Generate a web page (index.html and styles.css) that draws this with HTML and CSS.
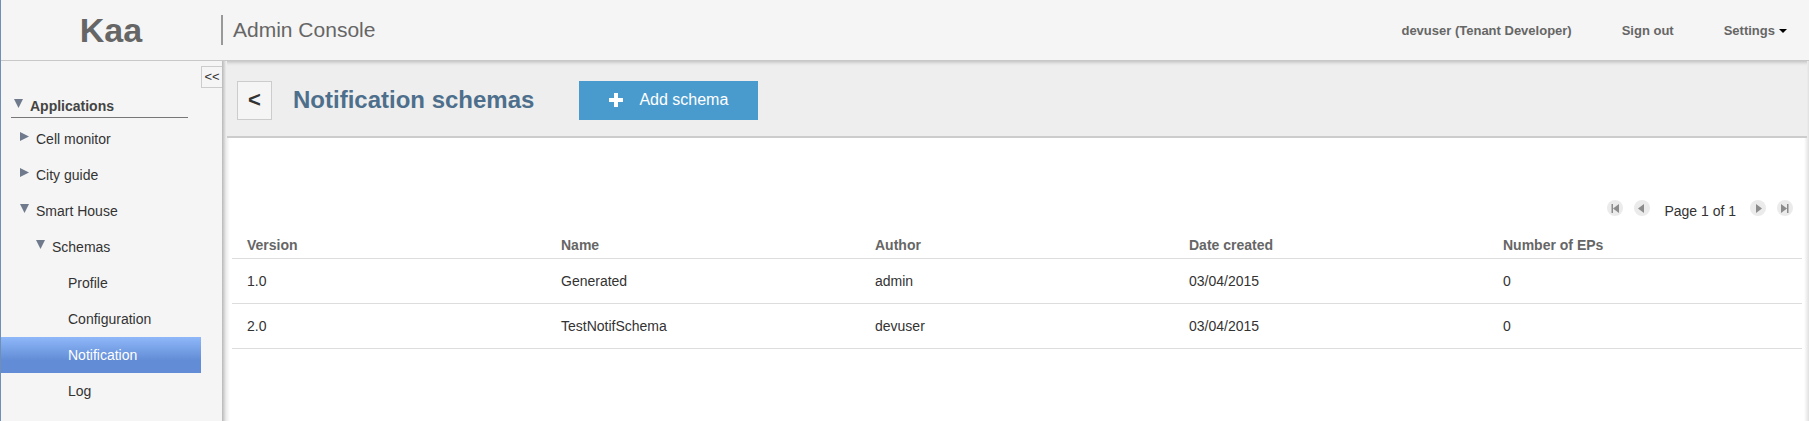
FILE: index.html
```html
<!DOCTYPE html>
<html lang="en">
<head>
<meta charset="utf-8">
<title>Kaa Admin Console</title>
<link rel="stylesheet" href="styles.css">
</head>
<body>
<header class="topbar">
  <div class="brand">Kaa</div>
  <div class="product">Admin Console</div>
  <nav class="menu">
    <a class="menu-link" href="#user">devuser (Tenant Developer)</a>
    <a class="menu-link" href="#signout">Sign out</a>
    <button class="menu-link settings" type="button">Settings
      <svg class="caret" width="8" height="4" viewBox="0 0 8 4"><path d="M0 0h8L4 4z" fill="#000"/></svg>
    </button>
  </nav>
</header>
<div class="body">
  <aside class="sidebar">
    <nav class="tree">
      <a class="tree-root" href="#applications">
        <svg class="arrow" width="9" height="9" viewBox="0 0 9 9"><path d="M0 0h9L4.500 9z"/></svg>Applications</a>
      <ul class="tree-list">
        <li><a class="node level-1" href="#cell"><svg class="arrow" width="9" height="9" viewBox="0 0 9 9"><path d="M0 0v9L9 4.500z"/></svg>Cell monitor</a></li>
        <li><a class="node level-1" href="#city"><svg class="arrow" width="9" height="9" viewBox="0 0 9 9"><path d="M0 0v9L9 4.500z"/></svg>City guide</a></li>
        <li><a class="node level-1" href="#house"><svg class="arrow" width="9" height="9" viewBox="0 0 9 9"><path d="M0 0h9L4.500 9z"/></svg>Smart House</a></li>
        <li><a class="node level-2" href="#schemas"><svg class="arrow" width="9" height="9" viewBox="0 0 9 9"><path d="M0 0h9L4.500 9z"/></svg>Schemas</a></li>
        <li><a class="node level-3" href="#profile">Profile</a></li>
        <li><a class="node level-3" href="#configuration">Configuration</a></li>
        <li><a class="node level-3 selected" href="#notification">Notification</a></li>
        <li><a class="node level-3" href="#log">Log</a></li>
      </ul>
    </nav>
    <button class="collapse" type="button">&lt;&lt;</button>
  </aside>
  <main class="content">
    <div class="page-head">
      <button class="back" type="button">&lt;</button>
      <h1 class="title">Notification schemas</h1>
      <button class="add" type="button">
        <svg width="14" height="14" viewBox="0 0 14 14"><path d="M5 0h4v5h5v4H9v5H5V9H0V5h5z" fill="#fff"/></svg>Add schema</button>
    </div>
    <div class="pager">
      <button class="page-btn" type="button" aria-label="First page"><svg width="16" height="16" viewBox="0 0 16 16"><circle cx="8" cy="8" r="8" fill="#ebebeb"/><path d="M4.500 4h1.500v9H4.500zM12 4v9L6 8.500z" fill="#8c8c8c"/></svg></button>
      <button class="page-btn" type="button" aria-label="Previous page"><svg width="16" height="16" viewBox="0 0 16 16"><circle cx="8" cy="8" r="8" fill="#ebebeb"/><path d="M10 4v9L4 8.500z" fill="#8c8c8c"/></svg></button>
      <span class="page-text">Page 1 of 1</span>
      <button class="page-btn" type="button" aria-label="Next page"><svg width="16" height="16" viewBox="0 0 16 16"><circle cx="8" cy="8" r="8" fill="#ebebeb"/><path d="M6 4v9l6-4.500z" fill="#8c8c8c"/></svg></button>
      <button class="page-btn" type="button" aria-label="Last page"><svg width="16" height="16" viewBox="0 0 16 16"><circle cx="8" cy="8" r="8" fill="#ebebeb"/><path d="M4 4v9l6-4.500zM10 4h1.500v9H10z" fill="#8c8c8c"/></svg></button>
    </div>
    <table class="grid">
      <thead>
        <tr><th>Version</th><th>Name</th><th>Author</th><th>Date created</th><th>Number of EPs</th></tr>
      </thead>
      <tbody>
        <tr><td>1.0</td><td>Generated</td><td>admin</td><td>03/04/2015</td><td>0</td></tr>
        <tr><td>2.0</td><td>TestNotifSchema</td><td>devuser</td><td>03/04/2015</td><td>0</td></tr>
      </tbody>
    </table>
  </main>
</div>
</body>
</html>
```
FILE: styles.css
```css
* { box-sizing: border-box; }

body {
  display: flex;
  flex-direction: column;
  min-height: 100vh;
  margin: 0;
  border-left: 1px solid #6f8fb5;
  background: #f5f5f5;
  color: #333;
  font: 14px/16px "Liberation Sans", Arial, sans-serif;
}

a { color: inherit; text-decoration: none; }

button {
  margin: 0;
  padding: 0;
  border: 0;
  background: none;
  color: inherit;
  font: inherit;
  cursor: pointer;
}

svg { display: block; }

/* Top bar */
.topbar {
  display: flex;
  align-items: center;
  height: 61px;
  padding-right: 22px;
  border-bottom: 1px solid #c8c8c8;
  color: #666;
}

.brand {
  width: 220px;
  font-size: 34px;
  line-height: 40px;
  font-weight: bold;
  text-align: center;
}

.product {
  padding-left: 10px;
  border-left: 2px solid #999;
  font-size: 21px;
  line-height: 30px;
}

.menu {
  display: flex;
  gap: 50px;
  margin-left: auto;
  padding-top: 2px;
  font-size: 13px;
  font-weight: bold;
}

.settings {
  display: flex;
  align-items: center;
  gap: 4px;
}

.body { display: flex; flex: 1; }

/* Navigation tree */
.sidebar {
  display: flex;
  align-items: flex-start;
  width: 221px;
}

.tree { flex: 1; padding-top: 37px; }

.arrow { flex: none; fill: #6f7b8c; }

.tree-root {
  display: flex;
  gap: 7px;
  margin: 0 13px 3px 10px;
  padding: 0 0 3px 3px;
  border-bottom: 1px solid #777;
  font-weight: bold;
  color: #444;
}

.tree-root .arrow { margin-top: 1px; }

.tree-list { margin: 0; padding: 0; list-style: none; }

.node {
  display: flex;
  gap: 7px;
  height: 36px;
  line-height: 36px;
}

.node .arrow { margin-top: 11px; }

.level-1 { padding-left: 19px; }
.level-2 { padding-left: 35px; }
.level-3 { padding-left: 67px; }

.selected {
  background: linear-gradient(#8fb8fa, #628cd5 65%);
  color: #fff;
}

.collapse {
  width: 21px;
  height: 22px;
  margin-top: 5px;
  border: 1px solid #ccc;
  border-right: 0;
  font-size: 13px;
}

/* Content: shaded along the left, right and top edges */
.content {
  flex: 1;
  padding: 0 2px 0 5px;
  background:
    linear-gradient(to right, rgba(0, 0, 0, 0.28), rgba(0, 0, 0, 0.08) 4px, transparent 8px),
    linear-gradient(to left, rgba(0, 0, 0, 0.12), transparent 5px),
    #fff;
}

.page-head {
  display: flex;
  align-items: center;
  height: 77px;
  padding: 3px 10px 0;
  border-bottom: 2px solid #ccc;
  background: linear-gradient(#c8c8c8, #e6e6e6 3px, #eee 5px);
}

.back {
  width: 35px;
  height: 39px;
  border: 1px solid #ccc;
  background: #f5f5f5;
  font-size: 22px;
  font-weight: bold;
}

.title {
  margin: 0 45px 0 21px;
  color: #4d6f8c;
  font-size: 24px;
  line-height: 28px;
}

.add {
  display: flex;
  align-items: center;
  gap: 16px;
  height: 39px;
  padding: 0 30px;
  background: #4a9bcd;
  color: #fff;
  font-size: 16px;
}

.pager {
  display: flex;
  justify-content: flex-end;
  gap: 11px;
  height: 19px;
  margin: 62px 14px 18px;
}

.page-btn { height: 16px; }

.page-text { align-self: flex-end; padding: 0 3px; }

.grid {
  width: calc(100% - 10px);
  margin: 0 5px;
  border-collapse: separate;
  border-spacing: 0;
  table-layout: fixed;
}

.grid th {
  padding: 0 15px 5px;
  border-bottom: 1px solid #ddd;
  color: #666;
  text-align: left;
}

.grid td {
  height: 45px;
  padding: 0 15px;
  border-bottom: 1px solid #ddd;
}
```
